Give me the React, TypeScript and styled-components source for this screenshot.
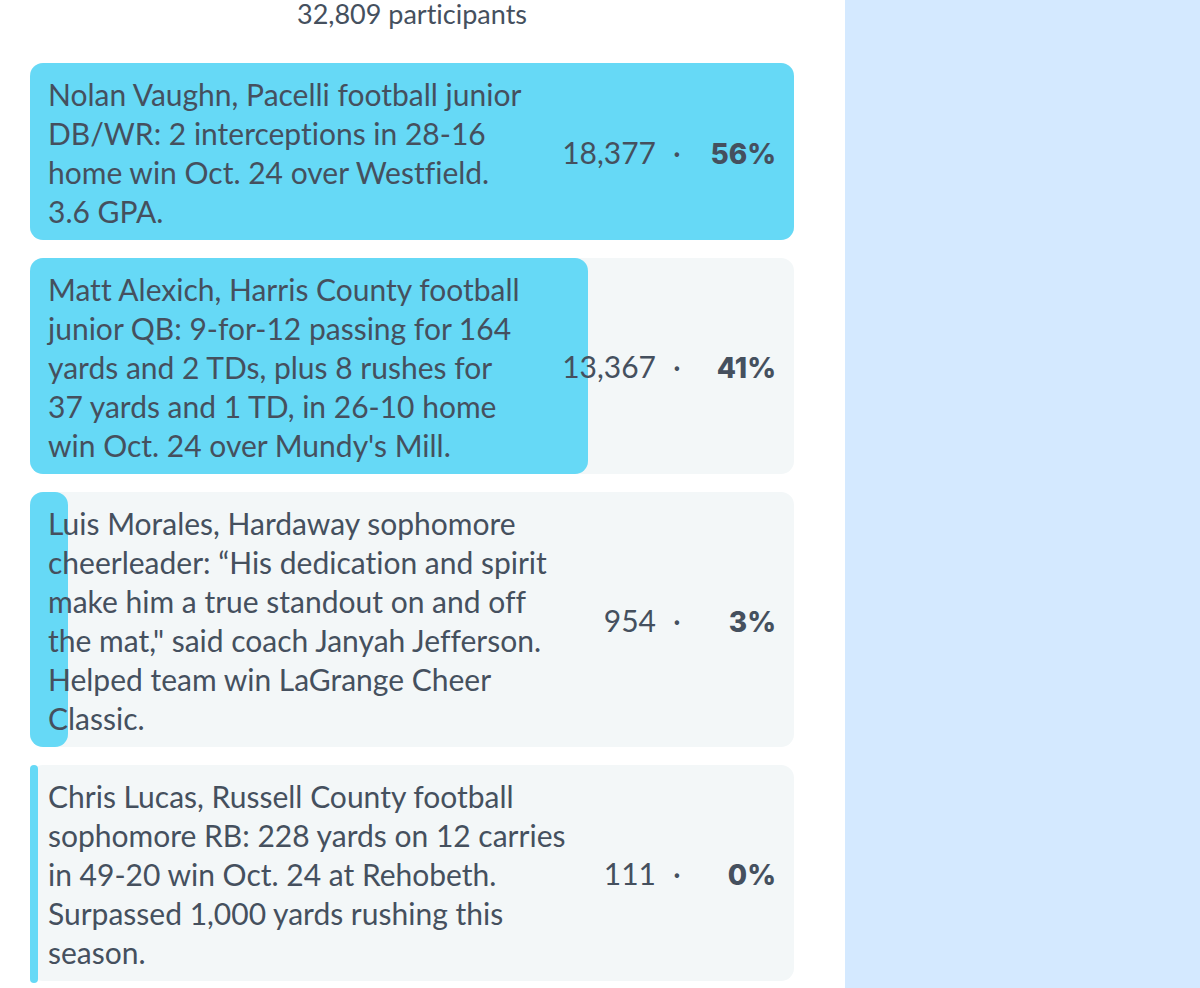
import React from "react";
import styled, { createGlobalStyle, css } from "styled-components";

const GlobalStyle = createGlobalStyle`
  *, *::before, *::after { box-sizing: border-box; }
  body {
    margin: 0;
    background: #d4e9ff;
    color: #45505e;
    font-family: Lato, "Open Sans", sans-serif;
    font-size: 30px;
    font-variant-ligatures: none;
    line-height: 39px;
  }
`;

const Page = styled.div`
  display: grid;
  grid-template-columns: minmax(0, 845fr) minmax(0, 355fr);
  min-height: 100vh;
`;

const PollPanel = styled.main`
  padding: 0 51px 7px 30px;
  background: #ffffff;
`;

const Participants = styled.p`
  margin: 0 0 35px;
  font-size: 27px;
  line-height: 28px;
  text-align: center;
`;

const Results = styled.ul`
  display: flex;
  flex-direction: column;
  gap: 18px;
  margin: 0;
  padding: 0;
  list-style: none;
`;

const Result = styled.li`
  position: relative;
  display: grid;
  grid-template-columns: minmax(0, 1fr) auto;
  align-items: center;
  padding: 12px 18px 9px;
  border-radius: 13px;
  background: #f3f7f8;
`;

const Fill = styled.div<{ $sliver: boolean }>`
  position: absolute;
  inset: 0 auto 0 0;
  border-radius: 13px;
  background: #66d9f6;
  ${({ $sliver }) =>
    $sliver &&
    css`
      bottom: -2px;
      border-radius: 4px;
    `}
`;

const Answer = styled.span`
  position: relative;
  white-space: pre;
`;

const Tally = styled.div`
  position: relative;
  display: grid;
  grid-template-columns: auto 42px 78px;
  align-items: baseline;
`;

const Votes = styled.span`
  font-variant-numeric: tabular-nums;
`;

const Dot = styled.span`
  text-align: center;
`;

const Percent = styled.strong`
  font-family: Inter, Lato, sans-serif;
  font-size: 28px;
  font-weight: 800;
  text-align: right;
`;

const results = [
  {
    lines: [
      "Nolan Vaughn, Pacelli football junior",
      "DB/WR: 2 interceptions in 28-16",
      "home win Oct. 24 over Westfield.",
      "3.6 GPA.",
    ],
    votes: 18377,
    percent: 56,
  },
  {
    lines: [
      "Matt Alexich, Harris County football",
      "junior QB: 9-for-12 passing for 164",
      "yards and 2 TDs, plus 8 rushes for",
      "37 yards and 1 TD, in 26-10 home",
      "win Oct. 24 over Mundy's Mill.",
    ],
    votes: 13367,
    percent: 41,
  },
  {
    lines: [
      "Luis Morales, Hardaway sophomore",
      "cheerleader: “His dedication and spirit",
      "make him a true standout on and off",
      "the mat,\" said coach Janyah Jefferson.",
      "Helped team win LaGrange Cheer",
      "Classic.",
    ],
    votes: 954,
    percent: 3,
  },
  {
    lines: [
      "Chris Lucas, Russell County football",
      "sophomore RB: 228 yards on 12 carries",
      "in 49-20 win Oct. 24 at Rehobeth.",
      "Surpassed 1,000 yards rushing this",
      "season.",
    ],
    votes: 111,
    percent: 0,
  },
];

const mostVotes = Math.max(...results.map((r) => r.votes));

export default function App() {
  return (
    <>
      <GlobalStyle />
      <Page>
        <PollPanel>
          <Participants>32,809 participants</Participants>
          <Results>
            {results.map(({ lines, votes, percent }) => {
              const share = Math.round((votes / mostVotes) * 100);
              return (
                <Result key={lines[0]}>
                  <Fill $sliver={share < 2} style={{ width: `${share}%` }} />
                  <Answer>{lines.join("\n")}</Answer>
                  <Tally>
                    <Votes>{votes.toLocaleString("en-US")}</Votes>
                    <Dot>·</Dot>
                    <Percent>{percent}%</Percent>
                  </Tally>
                </Result>
              );
            })}
          </Results>
        </PollPanel>
      </Page>
    </>
  );
}
